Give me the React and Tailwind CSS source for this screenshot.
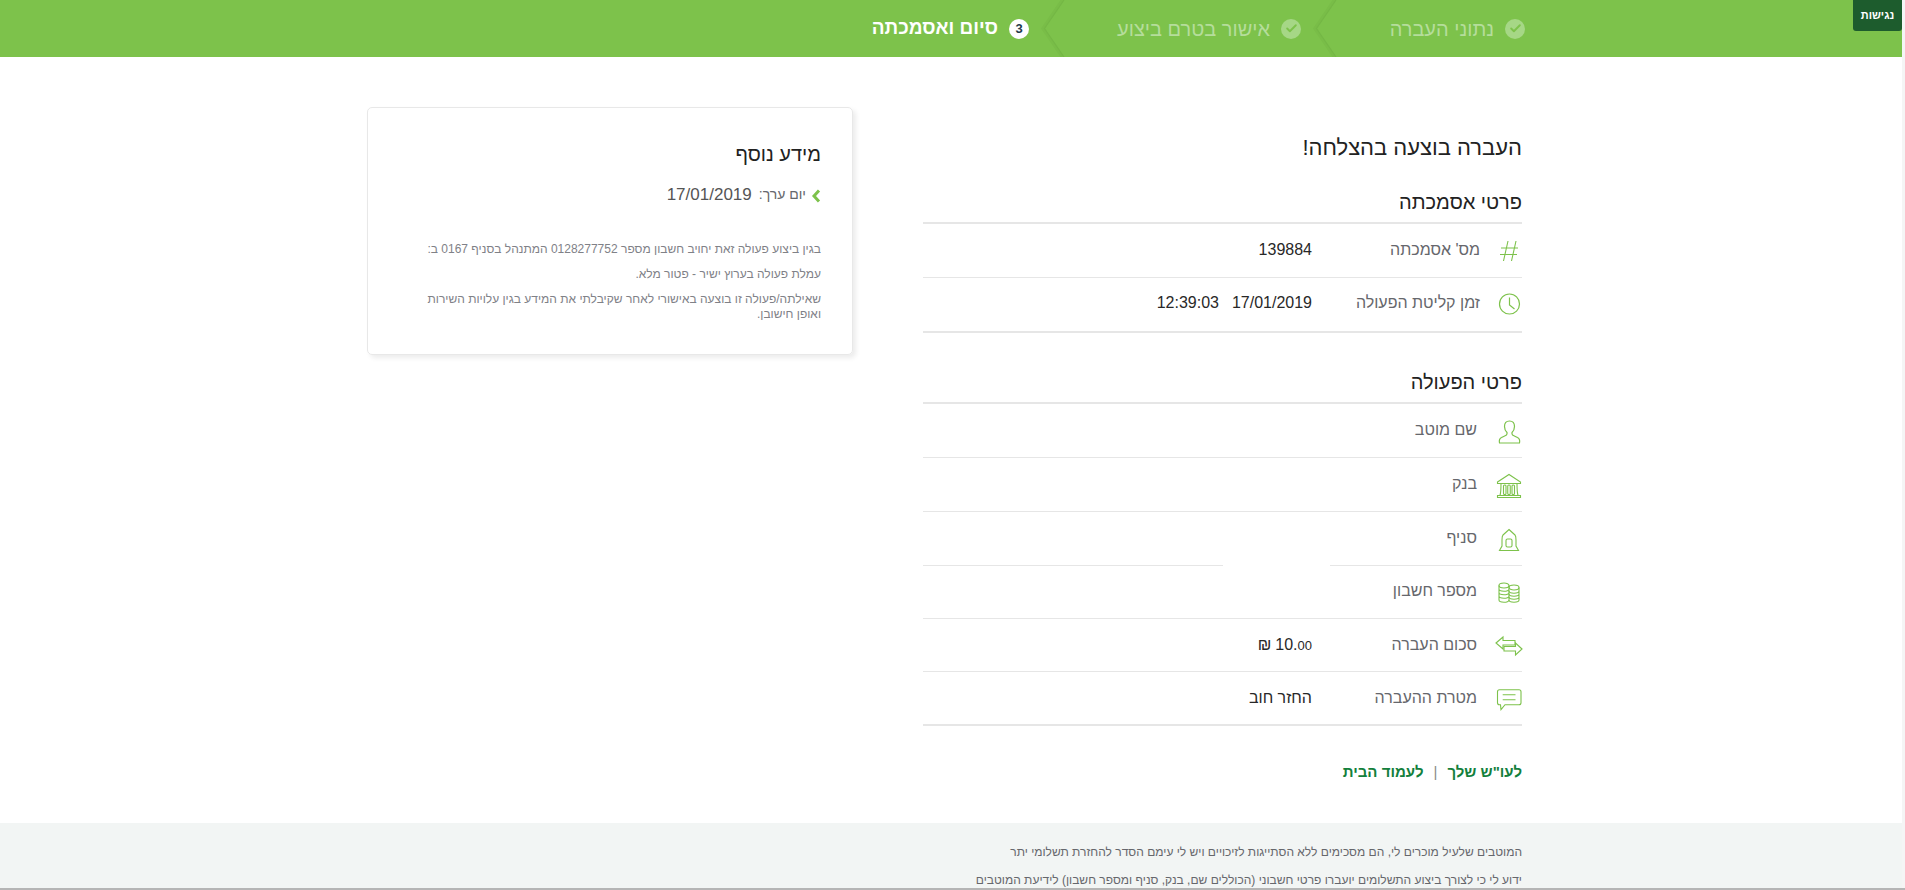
import { Check } from "lucide-react";

const FONT = "font-['Liberation_Sans',Arial,sans-serif]";

const Step = ({ num, label, done, chevron, width }) => (
  <div className={`relative h-full flex items-center gap-[11px] pr-[15px] ${width}`}>
    {done ? (
      <span className="w-5 h-5 rounded-full bg-[#a6d786] flex items-center justify-center">
        <Check size={13} strokeWidth={3.5} className="text-[#7dc24b]" />
      </span>
    ) : (
      <span className="w-5 h-5 rounded-full bg-white flex items-center justify-center text-[13px] font-bold text-[#1f3a4d]">
        {num}
      </span>
    )}
    <span className={done ? "text-[20px] text-[#b5dd9b]" : "text-[19px] font-bold text-white"}>{label}</span>
    {chevron && (
      <svg width="26" height="57" viewBox="0 0 26 57" className="absolute left-[-3px] top-0" fill="none">
        <path d="M21 0 L1.5 28.5 L21 57" stroke="#79bd48" strokeWidth="2.5" />
        <path d="M23 0 L3.5 28.5 L23 57" stroke="#74b745" strokeWidth="1.2" />
      </svg>
    )}
  </div>
);

const HashIcon = () => (
  <svg width="28" height="28" viewBox="0 0 28 28" fill="none" stroke="#7dc24b" strokeWidth="1.1">
    <path d="M13 4 L8.5 24 M21 4 L16.5 24 M6 11 H23 M5 17.5 H22" />
  </svg>
);
const ClockIcon = () => (
  <svg width="28" height="28" viewBox="0 0 28 28" fill="none" stroke="#7dc24b" strokeWidth="1.2">
    <circle cx="14.5" cy="14" r="10" />
    <path d="M14.5 7.5 V15 L19.5 19" />
  </svg>
);
const UserIcon = () => (
  <svg width="28" height="28" viewBox="0 0 28 28" fill="none" stroke="#7dc24b" strokeWidth="1.2">
    <path d="M14.5 3 C11 3 9.5 5.5 9.5 8.5 C9.5 11 10.5 13 12 14.5 V16 C12 17.5 9 18 6.5 19.5 C4.5 20.5 4 22.5 4.5 25 H24.5 C25 22.5 24.5 20.5 22.5 19.5 C20 18 17 17.5 17 16 V14.5 C18.5 13 19.5 11 19.5 8.5 C19.5 5.5 18 3 14.5 3 Z" />
  </svg>
);
const BankIcon = () => (
  <svg width="28" height="28" viewBox="0 0 28 28" fill="none" stroke="#7dc24b" strokeWidth="1.1">
    <path d="M2.5 10 L14 2.5 L25.5 10 V11.5 H2.5 Z M6 11.5 C6 16 6 20 5 23.5 M22 11.5 C22 16 22 20 23 23.5 M2.5 23.5 H25.5 V25.5 H2.5 Z" />
    <rect x="8.5" y="13" width="2.5" height="9.5" rx="1" />
    <rect x="12.75" y="13" width="2.5" height="9.5" rx="1" />
    <rect x="17" y="13" width="2.5" height="9.5" rx="1" />
  </svg>
);
const BranchIcon = () => (
  <svg width="28" height="28" viewBox="0 0 28 28" fill="none" stroke="#7dc24b" strokeWidth="1.1">
    <path d="M14 3.5 L20 9 C21 10 21 12 21 14 V20 L23.5 24.5 H4.5 L7 20 V14 C7 12 7 10 8 9 Z" />
    <rect x="11" y="13" width="6" height="8" rx="1.5" />
  </svg>
);
const CoinsIcon = () => (
  <svg width="28" height="28" viewBox="0 0 28 28" fill="none" stroke="#7dc24b" strokeWidth="1.1">
    <ellipse cx="9" cy="6.5" rx="5" ry="2.5" />
    <ellipse cx="19" cy="8.5" rx="5" ry="2.5" />
    <path d="M4 6.5 V21 C4 24 14 24 14 21 V6.5 M4 10 C4 13 14 13 14 10 M4 13.5 C4 16.5 14 16.5 14 13.5 M4 17 C4 20 14 20 14 17" />
    <path d="M14 21 C14 24 24 24 24 21 V8.5 M14 12 C14 15 24 15 24 12 M14 15 C14 18 24 18 24 15 M14 18 C14 21 24 21 24 18" />
  </svg>
);
const TransferIcon = () => (
  <svg width="28" height="28" viewBox="0 0 28 28" fill="none" stroke="#7dc24b" strokeWidth="1.1">
    <path d="M1 11 L8 5 V8.5 H20 V13 H8 V17 Z" />
    <path d="M27 17 L20.5 11 V14.5 H9 V19 H20.5 V23 Z" />
  </svg>
);
const ChatIcon = () => (
  <svg width="28" height="28" viewBox="0 0 28 28" fill="none" stroke="#7dc24b" strokeWidth="1.1">
    <path d="M4.5 4.7 H24 Q26 4.7 26 6.7 V17.7 Q26 19.7 24 19.7 H10 L6 24.7 L5.5 19.7 H4.5 Q2.5 19.7 2.5 17.7 V6.7 Q2.5 4.7 4.5 4.7 Z M7.7 9.7 H20.5 M7.7 14.7 H20.5" />
  </svg>
);

const Row = ({ icon, label, value, last, gap, height = "h-[54px]", labelPad = "pr-[17px]", iconPad = "pt-[1px]", textPad = "pb-[3px]" }) => (
  <div className={`relative ${height}`}>
    <div className="h-full flex items-center">
      <div className={`w-[28px] flex justify-center translate-x-[1px] ${iconPad}`}>{icon}</div>
      <div className={`w-[182px] text-[16px] text-[#66676c] ${textPad} ${labelPad}`}>{label}</div>
      <div className={`text-[16px] text-[#282828] ${textPad}`}>{value}</div>
    </div>
    {!last && (
      <div className="absolute left-0 right-0 bottom-0 h-[1px] flex">
        <div className="flex-1 bg-[#e6e6e6]" />
        {gap && <div className="w-[107px]" />}
        {gap && <div className="w-[300px] bg-[#e6e6e6]" />}
      </div>
    )}
  </div>
);

const Section = ({ title, children }) => (
  <div>
    <h3 className="text-[20px] leading-[24px] text-[#222222]">{title}</h3>
    <div className="mt-[8px] border-t-2 border-b-2 border-[#e6e6e6]">{children}</div>
  </div>
);

export default function App() {
  return (
    <div dir="rtl" className={`${FONT} h-[890px] w-full overflow-hidden flex flex-col bg-[#f5f5f5] border-b-2 border-[#b5b5b5] pr-[3px]`}>
      {/* header */}
      <header className="relative h-[57px] shrink-0 bg-[#7dc24b] flex pr-[362px]">
        <Step label="נתוני העברה" done chevron width="w-[224px]" />
        <Step label="אישור בטרם ביצוע" done chevron width="w-[272px]" />
        <Step num="3" label="סיום ואסמכתה" width="w-[272px]" />
        <button className="absolute right-0 top-0 w-[49px] h-[31px] rounded-b-[3px] bg-[#1d5c2d] text-white text-[11px] font-bold">
          נגישות
        </button>
      </header>

      <main className="flex-1 flex flex-col bg-white">
        <div className="flex pr-[380px] pt-[50px] h-[766px] shrink-0">
          {/* details column */}
          <div className="w-[599px] shrink-0">
            <h2 className="mt-[28px] text-[22px] leading-[26px] text-[#222222]">העברה בוצעה בהצלחה!</h2>
            <div className="mt-[29px]">
              <Section title="פרטי אסמכתה">
                <Row icon={<HashIcon />} label="מס' אסמכתה" value="139884" labelPad="pr-[14px]" iconPad="pb-[1px]" />
                <Row
                  icon={<ClockIcon />}
                  label="זמן קליטת הפעולה"
                  labelPad="pr-[14px]"
                  iconPad="pb-[1px]"
                  height="h-[53px]"
                  value={
                    <span className="flex gap-[13px]">
                      <span>17/01/2019</span>
                      <span>12:39:03</span>
                    </span>
                  }
                  last
                />
              </Section>
            </div>
            <div className="mt-[37px]">
              <Section title="פרטי הפעולה">
                <Row icon={<UserIcon />} label="שם מוטב" />
                <Row icon={<BankIcon />} label="בנק" />
                <Row icon={<BranchIcon />} label="סניף" gap />
                <Row icon={<CoinsIcon />} label="מספר חשבון" height="h-[53px]" />
                <Row
                  icon={<TransferIcon />}
                  label="סכום העברה"
                  height="h-[53px]"
                  textPad="pb-[1px]"
                  value={
                    <span dir="ltr" className="flex items-baseline gap-[4px]">
                      <span>₪</span>
                      <span>
                        10.<span className="text-[13px]">00</span>
                      </span>
                    </span>
                  }
                />
                <Row icon={<ChatIcon />} label="מטרת ההעברה" value="החזר חוב" height="h-[52px]" textPad="pb-[1px]" last />
              </Section>
            </div>
            <div className="mt-[35px] flex items-center gap-[10px] text-[15px] font-bold">
              <a className="text-[#13803c]">לעו"ש שלך</a>
              <span className="text-[#8a8a8a] font-normal">|</span>
              <a className="text-[#13803c]">לעמוד הבית</a>
            </div>
          </div>

          {/* info card */}
          <div className="w-[486px] h-[248px] mr-[70px] rounded-[5px] border border-[#e8e8e8] shadow-[3px_3px_5px_rgba(0,0,0,0.08)] pr-[31px] pl-[33px] pt-[34px]">
            <h3 className="text-[20px] leading-[24px] text-[#222222]">מידע נוסף</h3>
            <div className="mt-[16px] flex items-center text-[17px]">
              <svg width="10" height="14" viewBox="0 0 10 14" fill="none" stroke="#7dc24b" strokeWidth="3" className="ml-[5px] mt-[2px]">
                <path d="M8 1.5 L3 7 L8 12.5" />
              </svg>
              <span className="text-[14px] text-[#66676c]">יום ערך:</span>
              <span className="mr-[7px] text-[#555555]">17/01/2019</span>
            </div>
            <div className="mt-[34px] text-[12px] leading-[15px] text-[#808187]">
              <p>בגין ביצוע פעולה זאת יחויב חשבון מספר 0128277752 המתנהל בסניף 0167 ב:</p>
              <p className="mt-[10px]">עמלת פעולה בערוץ ישיר - פטור מלא.</p>
              <p className="mt-[10px]">שאילתה/פעולה זו בוצעה באישורי לאחר שקיבלתי את המידע בגין עלויות השירות ואופן חישובן.</p>
            </div>
          </div>
        </div>

        {/* footer note */}
        <div className="flex-1 bg-[#f2f5f4] pr-[380px] pt-[20px] text-[12px] text-[#66676c]">
          <p className="leading-[18px]">המוטבים שלעיל מוכרים לי, הם מסכימים ללא הסתייגות לזיכויים ויש לי עימם הסדר להחזרת תשלומי יתר</p>
          <p className="leading-[18px] mt-[10px]">ידוע לי כי לצורך ביצוע התשלומים יועברו פרטי חשבוני (הכוללים שם, בנק, סניף ומספר חשבון) לידיעת המוטבים</p>
        </div>
      </main>
    </div>
  );
}
